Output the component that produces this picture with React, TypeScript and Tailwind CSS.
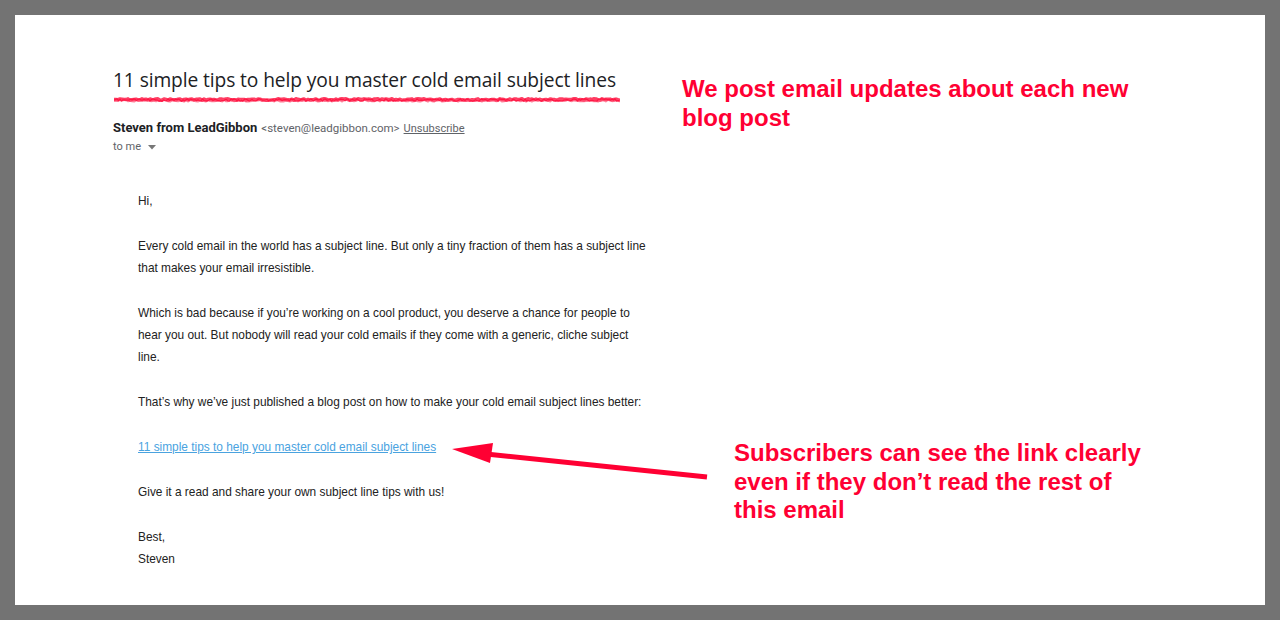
import React from "react";

function scribblePath(width: number, seed: number, yBase: number, amp: number, step: number) {
  let s = seed;
  const rnd = () => {
    s = (s * 9301 + 49297) % 233280;
    return s / 233280;
  };
  let d = `M 0 ${yBase}`;
  for (let x = step; x <= width; x += step) {
    const y = yBase + (rnd() - 0.5) * amp;
    d += ` L ${x} ${y.toFixed(2)}`;
  }
  return d;
}

function Scribble() {
  const w = 506;
  return (
    <svg width={w} height={10} viewBox={`0 0 ${w} 10`} className="block">
      <path d={scribblePath(w, 7, 4.5, 1.6, 2)} fill="none" stroke="#ff1a47" strokeWidth={3.4} strokeLinejoin="round" opacity={0.85} />
      <path d={scribblePath(w, 31, 5.5, 1.8, 2)} fill="none" stroke="#ff4a6e" strokeWidth={2.4} strokeLinejoin="round" opacity={0.7} />
      <path d={scribblePath(w, 53, 5, 2.4, 1.5)} fill="none" stroke="#ff0a3a" strokeWidth={1.2} strokeLinejoin="round" opacity={0.8} />
    </svg>
  );
}

export default function App() {
  const body = "font-['Liberation_Sans',Arial,sans-serif] text-[11.88px] leading-[22px] text-[#222222]";
  return (
    <div className="relative w-[1280px] h-[620px] bg-[#737373] p-[15px]">
      <div className="flex w-full h-full bg-white">
        <div className="w-[667px] pl-[98px] pt-[51px] shrink-0">
          <div className="font-['Open_Sans',Roboto,sans-serif] text-[19.2px] leading-[28px] text-[#202124] tracking-[-0.1px]">
            11 simple tips to help you master cold email subject lines
          </div>
          <div className="ml-[1px] mt-[1px]">
            <Scribble />
          </div>
          <div className="mt-[14px] font-['Roboto',sans-serif] leading-[18px] flex items-baseline whitespace-nowrap">
            <span className="text-[13px] font-bold text-[#202124]">Steven from LeadGibbon</span>
            <span className="ml-[4px] text-[11.5px] text-[#5f6368]">&lt;steven@leadgibbon.com&gt;</span>
            <span className="ml-[4px] text-[11px] text-[#5f6368] underline">Unsubscribe</span>
          </div>
          <div className="font-['Roboto',sans-serif] text-[11px] leading-[18px] text-[#5f6368] flex items-center">
            <span>to me</span>
            <svg width="8" height="5" viewBox="0 0 8 5" className="ml-[7px]">
              <path d="M0 0 L8 0 L4 4.5 Z" fill="#777777" />
            </svg>
          </div>
          <div className={`${body} ml-[25px] mt-[34px] w-[510px]`}>
            <p className="mb-[23px]">Hi,</p>
            <p className="mb-[23px]">
              Every cold email in the world has a subject line. But only a tiny fraction of them has a subject line that makes your email irresistible.
            </p>
            <p className="mb-[23px]">
              Which is bad because if you’re working on a cool product, you deserve a chance for people to hear you out. But nobody will read your cold emails if they come with a generic, cliche subject line.
            </p>
            <p className="mb-[23px]">
              That’s why we’ve just published a blog post on how to make your cold email subject lines better:
            </p>
            <p className="mb-[23px]">
              <span className="text-[#4aa3df] underline">11 simple tips to help you master cold email subject lines</span>
            </p>
            <p className="mb-[23px]">Give it a read and share your own subject line tips with us!</p>
            <p>
              Best,
              <br />
              Steven
            </p>
          </div>
        </div>
        <div className="pt-[59px] font-['Liberation_Sans',Arial,sans-serif] font-bold text-[24px] leading-[29px] text-[#ff0033]">
          <div className="w-[470px]">We post email updates about each new blog post</div>
          <div className="ml-[52px] mt-[307px] w-[412px] leading-[28.5px]">
            Subscribers can see the link clearly even if they don’t read the rest of this email
          </div>
        </div>
      </div>
      <svg className="absolute left-0 top-0 pointer-events-none" width="1280" height="620" viewBox="0 0 1280 620">
        <line x1="707" y1="477" x2="486" y2="454" stroke="#ff0033" strokeWidth="5" />
        <polygon points="452,449 493,443 490,463" fill="#ff0033" />
      </svg>
    </div>
  );
}
